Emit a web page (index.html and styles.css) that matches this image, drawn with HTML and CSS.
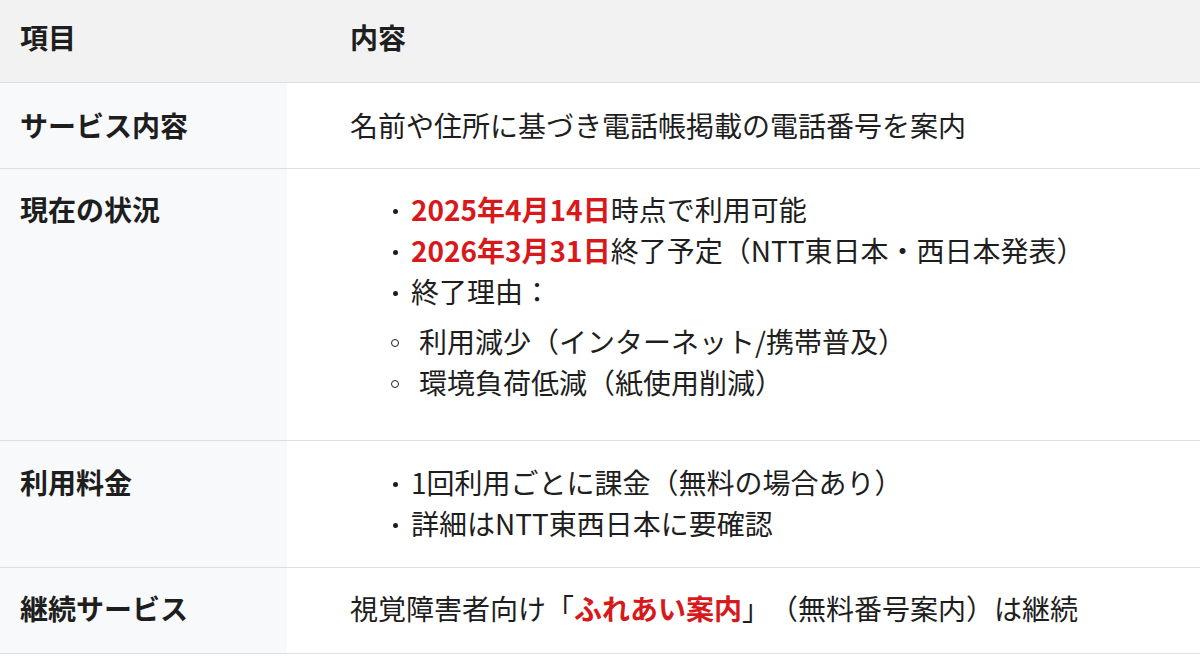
FILE: index.html
```html
<!DOCTYPE html>
<html lang="ja">
<head>
<meta charset="utf-8">
<link rel="stylesheet" href="styles.css">
</head>
<body>
<table class="info">
  <thead>
    <tr>
      <th class="label">項目</th>
      <th class="content">内容</th>
    </tr>
  </thead>
  <tbody>
    <tr class="r1">
      <td class="label">サービス内容</td>
      <td class="content">名前や住所に基づき電話帳掲載の電話番号を案内</td>
    </tr>
    <tr class="r2">
      <td class="label">現在の状況</td>
      <td class="content">
        <ul class="dots">
          <li><span class="hl">2025年4月14日</span>時点で利用可能</li>
          <li><span class="hl">2026年3月31日</span>終了予定（NTT東日本・西日本発表）</li>
          <li>終了理由：</li>
        </ul>
        <ul class="circles">
          <li>利用減少（インターネット/携帯普及）</li>
          <li>環境負荷低減（紙使用削減）</li>
        </ul>
      </td>
    </tr>
    <tr class="r3">
      <td class="label">利用料金</td>
      <td class="content">
        <ul class="dots">
          <li>1回利用ごとに課金（無料の場合あり）</li>
          <li>詳細はNTT東西日本に要確認</li>
        </ul>
      </td>
    </tr>
    <tr class="r4">
      <td class="label">継続サービス</td>
      <td class="content">視覚障害者向け「<span class="hl">ふれあい案内</span>」（無料番号案内）は継続</td>
    </tr>
  </tbody>
</table>
</body>
</html>
```

FILE: styles.css
```css
html, body {
  margin: 0;
  padding: 0;
  background: #ffffff;
}

body {
  font-family: "Noto Sans CJK JP", "Noto Sans", sans-serif;
  font-size: 28px;
  line-height: 41px;
  color: #1e1e1e;
  text-spacing-trim: space-all;
}

.info {
  width: 1200px;
  border-collapse: collapse;
  table-layout: fixed;
}

.info th,
.info td {
  text-align: left;
  vertical-align: top;
  border-bottom: 1px solid #dedede;
}

.info th {
  background: #f2f2f2;
  font-weight: 700;
  padding-top: 17px;
  padding-bottom: 24px;
}

.info .label {
  width: 267px;
  padding-left: 20px;
  padding-right: 0;
}

.info td.label {
  background: #f8f9fa;
  font-weight: 700;
}

.info .content {
  padding-left: 63px;
  padding-right: 0;
}

.r1 td {
  padding-top: 22px;
  padding-bottom: 22px;
}

.r2 td {
  padding-top: 20px;
  padding-bottom: 37px;
}

.r3 td {
  padding-top: 21px;
  padding-bottom: 23px;
}

.r4 td {
  padding-top: 20px;
  padding-bottom: 24px;
}

.hl {
  color: #d7191c;
  font-weight: 700;
}

ul {
  list-style: none;
  margin: 0;
  padding: 0 0 0 40px;
}

.dots li::before {
  content: "";
  display: inline-block;
  width: 5px;
  height: 5px;
  border-radius: 50%;
  background: #1e1e1e;
  margin-left: 3px;
  margin-right: 13px;
  vertical-align: middle;
  position: relative;
  top: -2px;
}

.circles {
  margin-top: 9px;
}

.circles li::before {
  content: "";
  display: inline-block;
  width: 6px;
  height: 6px;
  border-radius: 50%;
  border: 1.5px solid #1e1e1e;
  margin-left: 1px;
  margin-right: 20px;
  vertical-align: middle;
  position: relative;
  top: -2px;
}
```
